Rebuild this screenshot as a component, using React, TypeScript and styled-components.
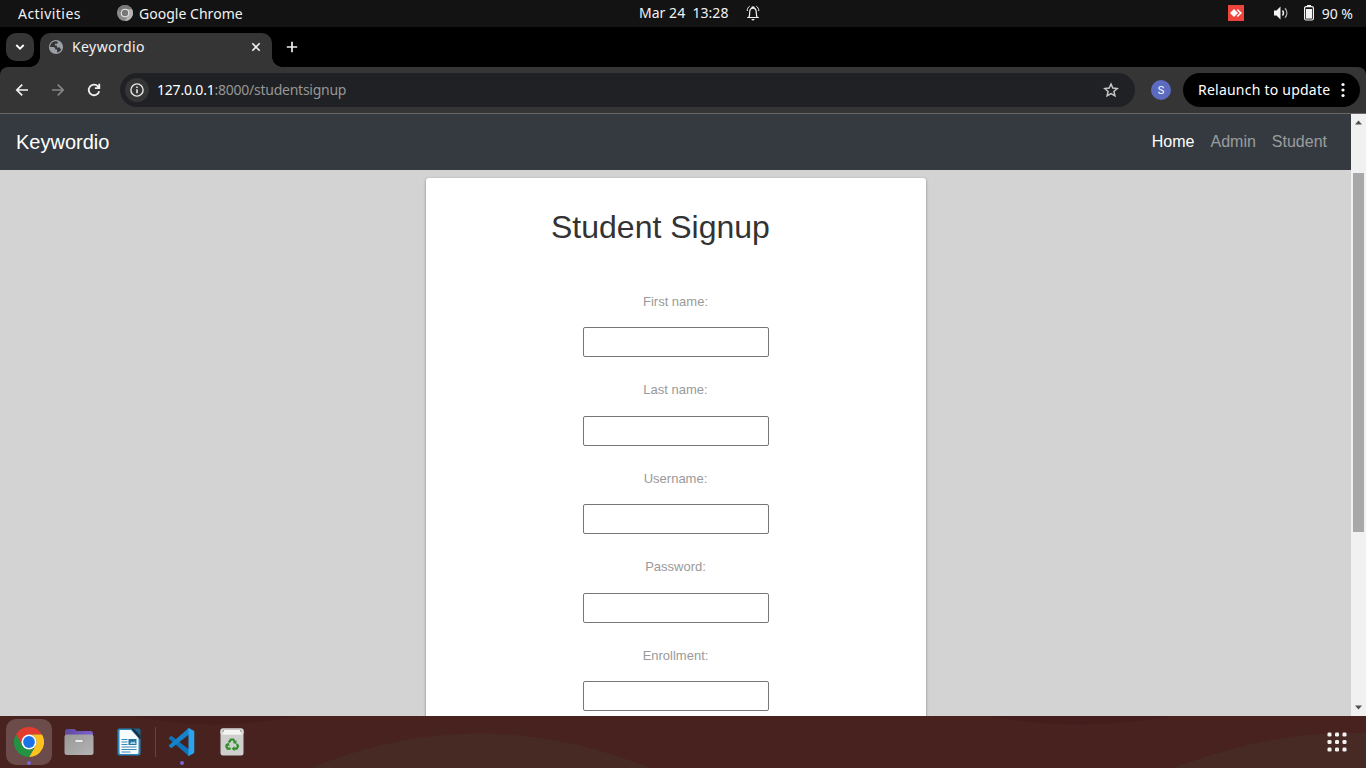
import React from "react";
import styled, { createGlobalStyle } from "styled-components";

const Global = createGlobalStyle`
  * { box-sizing: border-box; }
  body { margin: 0; background: #000; overflow: hidden; }
`;

const ui = `"Noto Sans", "Open Sans", sans-serif`;
const sans = `"Liberation Sans", Arial, sans-serif`;

const Screen = styled.div`
  width: 1366px;
  height: 768px;
  display: flex;
  flex-direction: column;
  overflow: hidden;
  font-family: ${ui};
`;

const Label = styled.span<{ $track?: number; $color?: string; $drop?: number }>`
  font-size: 14px;
  letter-spacing: ${(p) => p.$track ?? 0}px;
  color: ${(p) => p.$color ?? "#f2f2f2"};
  padding-top: ${(p) => p.$drop ?? 0}px;
  white-space: pre;
  line-height: 20px;
`;

const TopBar = styled.header`
  height: 27px;
  flex: none;
  background: #131313;
  display: grid;
  grid-template-columns: 639px 1fr auto;
  align-items: center;
  padding-right: 13px;
`;

const TopGroup = styled.div<{ $left?: number; $gap: number; $lift?: number }>`
  display: flex;
  align-items: center;
  gap: ${(p) => p.$gap}px;
  padding-left: ${(p) => p.$left ?? 0}px;
  padding-bottom: ${(p) => p.$lift ?? 0}px;
`;

const TabStrip = styled.div`
  height: 40px;
  flex: none;
  background: #000;
  display: flex;
  padding-left: 6px;
`;

const TabSearch = styled.button`
  width: 28px;
  height: 28px;
  margin: 6px 6px 0 0;
  padding: 0;
  border: 0;
  border-radius: 10px;
  background: #353535;
  display: grid;
  place-items: center;
`;

const Tab = styled.div`
  position: relative;
  width: 232px;
  height: 34px;
  margin-top: 6px;
  padding: 0 9px 6px 8px;
  border-radius: 10px 10px 0 0;
  background: #353535;
  display: flex;
  align-items: center;
  gap: 8px;
  &::before, &::after {
    content: "";
    position: absolute;
    bottom: 0;
    width: 10px;
    height: 10px;
  }
  &::before { left: -10px; background: radial-gradient(circle at 0 0, transparent 9.5px, #353535 10px); }
  &::after { right: -10px; background: radial-gradient(circle at 100% 0, transparent 9.5px, #353535 10px); }
`;

const TabTitle = styled.div`
  flex: 1;
  display: flex;
`;

const NewTab = styled.div`
  display: flex;
  margin: 13px 0 0 13px;
  height: 14px;
`;

const Toolbar = styled.div`
  height: 47px;
  flex: none;
  background: #353535;
  border-bottom: 1px solid #696866;
  border-radius: 8px 8px 0 0;
  display: flex;
  align-items: center;
  padding: 0 6px 1px 14px;
`;

const NavIcons = styled.div`
  display: flex;
  gap: 20px;
  width: 106px;
`;

const Omnibox = styled.div`
  width: 1015px;
  height: 34px;
  border-radius: 17px;
  background: #202124;
  display: flex;
  align-items: center;
  padding: 0 16px 0 5px;
`;

const InfoChip = styled.div`
  width: 24px;
  height: 24px;
  border-radius: 50%;
  background: #353535;
  display: grid;
  place-items: center;
  margin-right: 8px;
`;

const Url = styled.div`
  flex: 1;
  display: flex;
`;

const Avatar = styled.div`
  width: 20px;
  height: 20px;
  margin: 0 12px 0 16px;
  border-radius: 50%;
  background: #5c6bc0;
  color: #fff;
  font: 11px/21px Roboto, sans-serif;
  text-align: center;
`;

const Relaunch = styled.button`
  width: 177px;
  height: 34px;
  border: 0;
  border-radius: 17px;
  background: #000;
  font-family: inherit;
  display: flex;
  align-items: center;
  justify-content: space-between;
  padding: 0 15px;
`;

const Viewport = styled.div`
  height: 602px;
  flex: none;
  display: flex;
`;

const Page = styled.div`
  flex: 1;
  background: #d3d3d3;
  overflow: hidden;
  font-family: ${sans};
`;

const Navbar = styled.nav`
  height: 56px;
  background: #343a40;
  display: flex;
  align-items: center;
  justify-content: space-between;
  padding: 0 24px 0 16px;
`;

const Brand = styled.div`
  color: #fff;
  font-size: 20px;
  line-height: 30px;
`;

const Links = styled.div`
  display: flex;
  gap: 16px;
`;

const NavLink = styled.a<{ $active?: boolean }>`
  font-size: 16px;
  line-height: 24px;
  color: ${(p) => (p.$active ? "#fff" : "rgba(255, 255, 255, 0.5)")};
`;

const Card = styled.form`
  width: 500px;
  height: 700px;
  margin: 8px auto 0 426px;
  background: #fff;
  border-radius: 3px;
  box-shadow: 0 1px 3px rgba(0, 0, 0, 0.4);
`;

const Title = styled.h2`
  margin: 0;
  padding: 30px 0 0 125px;
  height: 113.6px;
  font-size: 32px;
  line-height: 38px;
  font-weight: 400;
  color: #333;
`;

const Field = styled.label`
  display: flex;
  flex-direction: column;
  align-items: center;
  height: 88.5px;
  font-size: 13px;
  line-height: 20px;
  color: #999;
`;

const FieldName = styled.span`
  padding-right: 1px;
`;

const Input = styled.input`
  width: 186px;
  height: 30px;
  margin: 15.6px 0 0;
  border: 1px solid #767676;
  border-radius: 2px;
  background: #fff;
`;

const Scrollbar = styled.div`
  width: 15px;
  background: #f1f1f1;
  display: flex;
  flex-direction: column;
  align-items: center;
`;

const Arrow = styled.svg`
  margin-top: 6px;
  flex: none;
`;

const Thumb = styled.div`
  width: 11px;
  height: 359px;
  margin: 48px 0 167px;
  background: #a8a8a8;
`;

const Dock = styled.footer`
  position: relative;
  height: 52px;
  flex: none;
  background: #48221f;
  display: flex;
  align-items: center;
  padding: 0 16px 0 6px;
`;

const Backdrop = styled.svg`
  position: absolute;
  inset: 0;
`;

const DockItem = styled.div<{ $active?: boolean; $ml?: number }>`
  position: relative;
  width: 46px;
  height: 46px;
  margin-left: ${(p) => p.$ml ?? 0}px;
  border-radius: 10px;
  background: ${(p) => (p.$active ? "#6b4c4a" : "transparent")};
  display: grid;
  place-items: center;
`;

const RunningDot = styled.i`
  position: absolute;
  bottom: 0;
  left: 21px;
  width: 4px;
  height: 4px;
  border-radius: 50%;
  background: #7d63d8;
`;

const Divider = styled.div`
  position: relative;
  width: 1px;
  height: 30px;
  margin-left: 3px;
  background: #5e4644;
`;

const AppGrid = styled.div`
  position: relative;
  margin-left: auto;
  width: 26px;
  height: 26px;
`;

const FIELDS = ["First name:", "Last name:", "Username:", "Password:", "Enrollment:"];

const GreyChrome = () => (
  <svg width="16" height="16" viewBox="0 0 16 16">
    <circle cx="8" cy="8" r="8" fill="#8b8b8b" />
    <path d="M1.1 4A8 8 0 0 1 14.9 4H8a4 4 0 0 0-3.8 5.2z" fill="#777" />
    <path d="M15 4.2A8 8 0 0 1 8 16l3.4-6A4 4 0 0 0 8 4.2z" fill="#b5b5b5" />
    <circle cx="8" cy="8" r="3.9" fill="#777" stroke="#eee" strokeWidth="1" />
  </svg>
);

const Bell = () => (
  <svg width="14" height="16" viewBox="0 0 14 16" fill="none" stroke="#f2f2f2" strokeWidth="1.2">
    <path d="M1.2 12.5h11.6M2.8 12.3c.8-1 .9-2.2.9-4.8C3.7 4.6 4.8 3.1 7 3.1s3.3 1.5 3.3 4.4c0 2.6.1 3.8.9 4.8M5.7 3.3C5.7 1.5 8.3 1.5 8.3 3.3" />
    <path d="M1.2 6C1.2 3.8 2 2.3 3.7 1.2M12.8 6c0-2.2-.8-3.7-2.5-4.8" strokeWidth="1" />
    <path d="M5 14h4l-2 1.8z" fill="#f2f2f2" stroke="none" />
  </svg>
);

const AnyDesk = () => (
  <svg width="16" height="16" viewBox="0 0 16 16">
    <path fill="#ef443b" d="M0 0h16v16H0z" />
    <path fill="#fff" d="M6 4l4 4-4 4-4-4zM8.7 5l1.1-1.1L14 8l-4.2 4.1L8.7 11l3-3z" />
  </svg>
);

const Speaker = () => (
  <svg width="16" height="16" viewBox="0 0 16 16" fill="none" stroke="#f2f2f2">
    <path d="M1 5.5h2.5L7.5 1.5v13L3.5 10.5H1z" fill="#f2f2f2" stroke="none" />
    <path d="M9.5 5.5c1.2 1.5 1.2 3.5 0 5" strokeWidth="1.4" />
    <path d="M12 3.3c2.5 2.7 2.5 6.7 0 9.4" stroke="#aaa" strokeWidth="1.3" />
  </svg>
);

const Battery = () => (
  <svg width="10" height="16" viewBox="0 0 10 16">
    <path d="M3 0h4v2H3z" fill="#f2f2f2" />
    <rect x=".6" y="1.6" width="8.8" height="13.4" rx="1.5" fill="none" stroke="#f2f2f2" strokeWidth="1.2" />
    <path d="M2 4h6v9.6H2z" fill="#f2f2f2" />
  </svg>
);

const Globe = () => (
  <svg width="16" height="16" viewBox="0 0 16 16">
    <circle cx="8" cy="8" r="7.1" fill="#9aa0a6" />
    <path fill="#353535" d="M8.6 2.3C6.2 2 4.1 3 3 4.9c-.8 1.3-1 2.4-.8 3.1h2.9c1.4 0 2.1.8 2.1 1.8v.8h1.9v2.9c2.2-.5 3.7-1.7 4.3-3.6L12 9.7V8.4H8.9V6.6H7V4.8h1.7c1 0 1-.9 1-1.8z" />
  </svg>
);

const Chrome = () => (
  <svg width="30" height="30" viewBox="0 0 30 30">
    <path d="M2 7.5A15 15 0 0 1 28 7.5H15L8.5 18.7z" fill="#e33b2e" />
    <path d="M28 7.5A15 15 0 0 1 15 30l6.5-11.3A7.5 7.5 0 0 0 15 7.5z" fill="#fcc31e" />
    <path d="M15 30A15 15 0 0 1 2 7.5l6.5 11.2a7.5 7.5 0 0 0 13 0z" fill="#229343" />
    <circle cx="15" cy="15" r="7.5" fill="#fff" />
    <circle cx="15" cy="15" r="5.9" fill="#1b73e8" />
  </svg>
);

const Files = () => (
  <svg width="30" height="28" viewBox="0 0 30 28">
    <defs>
      <linearGradient id="folder" x1="0" y1="0" x2="1" y2="1">
        <stop stopColor="#989898" /><stop offset="1" stopColor="#b4b4b4" />
      </linearGradient>
      <linearGradient id="folderBack"><stop stopColor="#5f4a9e" /><stop offset="1" stopColor="#7a61d0" /></linearGradient>
    </defs>
    <path d="M1 3.500A2.500 2.500 0 0 1 3.500 1h7l2 2h14A2.500 2.500 0 0 1 29 5.500V10H1z" fill="url(#folderBack)" />
    <path d="M.5 8.700A2.200 2.200 0 0 1 2.700 6.500h24.600A2.200 2.200 0 0 1 29.500 8.700v15.800A2.500 2.500 0 0 1 27 27H3a2.500 2.500 0 0 1-2.500-2.500z" fill="url(#folder)" />
    <path d="M11 11.7h8v2.6h-8z" fill="#f8f8f8" stroke="#858585" strokeWidth=".6" />
  </svg>
);

const Writer = () => (
  <svg width="24" height="28" viewBox="0 0 24 28">
    <path d="M2.5.5H16L23.5 8v17a2.5 2.5 0 0 1-2.5 2.5H2.5A2.3 2.3 0 0 1 .5 25V2.5a2 2 0 0 1 2-2z" fill="#2a86bb" />
    <path d="M3 2h11L21.5 10V24.5A1.5 1.5 0 0 1 20 26H4A1.5 1.5 0 0 1 2.5 24.5V3a1 1 0 0 1 .5-1z" fill="#f8fbfc" />
    <path d="M16 .5h5.5a2 2 0 0 1 2 2V8z" fill="#1a648f" />
    <path d="M14 .5h2.5l7 7.5v4z" fill="#17303c" />
    <path d="M4.5 11.5h6M4.5 14h6M4.5 16.5h6M4.5 19h15M4.5 21.5h15M4.5 24h9" stroke="#3789b7" strokeWidth="1.2" />
    <path d="M11.5 11h8v6h-8z" fill="#22729f" />
    <path d="M12.7 16l2-2.5 1.2 1 1.3-1.5 1.7 3z" fill="#9fd3ec" />
  </svg>
);

const Code = () => (
  <svg width="28" height="28" viewBox="0 0 28 28">
    <path d="M1 9.7l1.7-1.5c.4-.3.9-.3 1.3 0L21 21.5V27.3c-.7.1-1.2-.1-1.7-.6L1 10.8c-.4-.4-.4-.8 0-1.1z" fill="#0b74bd" />
    <path d="M1 18.3l1.7 1.5c.4.3.9.3 1.3 0L21 6.500V.7c-.7-.1-1.2.1-1.7.6L1 17.2c-.4.4-.4.8 0 1.1z" fill="#1583cb" />
    <path d="M19.3 27.2c.8.8 1.3.7 1.9.5l4.2-2.3c.6-.3.9-.7.9-1.4V4c0-.7-.3-1.1-.9-1.4L21.2.3c-.6-.2-1.1-.3-1.9.5.7-.5 1.2-.2 1.2.9v24.6c0 1.1-.5 1.4-1.2.9z" fill="#2ba4ee" />
  </svg>
);

const Trash = () => (
  <svg width="24" height="28" viewBox="0 0 24 28">
    <rect x=".5" y=".5" width="23" height="27" rx="2.5" fill="#cfcfcd" />
    <rect x=".5" y=".5" width="23" height="6.5" rx="2" fill="#dededd" />
    <path d="M2.5 1.7h19v2.3h-19z" fill="#9c9c9a" />
    <path d="M4 2h16l1 4.5H3z" fill="#f4f4f4" />
    <g fill="none" stroke="#2f8f2b" strokeWidth="2.2">
      <path d="M8.8 14.5l2.1-3h2.4l1.4 2.3" />
      <path d="M17 16l1 2.2-1.3 2.5h-3" />
      <path d="M10.7 20.7H7.5L6.3 18.3l1.1-2.1" />
    </g>
    <path d="M16.5 12.3v3.7l-3.7-1.1zM14.5 18.2v5l-2.8-2.5zM5.3 16.2l3.4-1.5.9 3.5z" fill="#2f8f2b" />
  </svg>
);

export default function App() {
  return (
    <Screen>
      <Global />
      <TopBar>
        <TopGroup $left={18} $gap={36}>
          <Label $track={0.46}>Activities</Label>
          <TopGroup $gap={6} $lift={1}>
            <GreyChrome />
            <Label $track={0.03} $drop={1}>Google Chrome</Label>
          </TopGroup>
        </TopGroup>
        <TopGroup $gap={18} $lift={1}>
          <Label $track={0.03}>Mar 24  13:28</Label>
          <Bell />
        </TopGroup>
        <TopGroup $gap={0} $lift={1}>
          <AnyDesk />
          <TopGroup $left={29} $gap={15}>
            <Speaker />
            <TopGroup $gap={8}>
              <Battery />
              <Label $drop={2}>90 %</Label>
            </TopGroup>
          </TopGroup>
        </TopGroup>
      </TopBar>

      <TabStrip>
        <TabSearch>
          <svg width="10" height="8" viewBox="0 0 10 8" fill="none" stroke="#fff" strokeWidth="1.8"><path d="M1.3 2L5 5.7 8.7 2" /></svg>
        </TabSearch>
        <Tab>
          <Globe />
          <TabTitle><Label $track={0.42}>Keywordio</Label></TabTitle>
          <svg width="14" height="14" viewBox="0 0 14 14" stroke="#eee" strokeWidth="1.6"><path d="M3.3 3.3l7.4 7.4M10.7 3.3l-7.4 7.4" /></svg>
        </Tab>
        <NewTab>
          <svg width="14" height="14" viewBox="0 0 14 14" stroke="#eee" strokeWidth="1.7"><path d="M7 1.8v10.4M1.8 7h10.4" /></svg>
        </NewTab>
      </TabStrip>

      <Toolbar>
        <NavIcons>
          <svg width="16" height="16" viewBox="0 0 16 16" fill="none" stroke="#f1f1f1" strokeWidth="1.7"><path d="M14 8H3M8.2 2.6L2.8 8l5.4 5.4" /></svg>
          <svg width="16" height="16" viewBox="0 0 16 16" fill="none" stroke="#858585" strokeWidth="1.7"><path d="M2 8h11M7.8 2.6L13.2 8l-5.4 5.4" /></svg>
          <svg width="16" height="16" viewBox="0 0 16 16" fill="none" stroke="#f1f1f1" strokeWidth="1.8"><path d="M13.2 9.2A5.3 5.3 0 1 1 12 4.4l1.2 1.3M13.3 1.8v4.4H8.9" /></svg>
        </NavIcons>
        <Omnibox>
          <InfoChip>
            <svg width="16" height="16" viewBox="0 0 16 16" fill="none" stroke="#e8e8e8" strokeWidth="1.4"><circle cx="8" cy="8" r="6.1" /><path d="M8 7.2v4M8 4.5v1.6" strokeWidth="1.6" /></svg>
          </InfoChip>
          <Url>
            <Label $color="#fff" $track={-0.2}>127.0.0.1</Label>
            <Label $color="#969696" $track={-0.25}>:8000/studentsignup</Label>
          </Url>
          <svg width="16" height="16" viewBox="0 0 16 16" fill="none" stroke="#c7c7c7" strokeWidth="1.5"><path d="M8 2l1.8 4.1 4.4.4-3.3 2.9 1 4.4L8 11.5l-3.9 2.3 1-4.4L1.8 6.5l4.4-.4z" /></svg>
        </Omnibox>
        <Avatar>S</Avatar>
        <Relaunch>
          <Label $color="#fff" $track={0.23}>Relaunch to update</Label>
          <svg width="4" height="16" viewBox="0 0 4 16" fill="#fff"><circle cx="2" cy="2.5" r="1.6" /><circle cx="2" cy="8" r="1.6" /><circle cx="2" cy="13.5" r="1.6" /></svg>
        </Relaunch>
      </Toolbar>

      <Viewport>
        <Page>
          <Navbar>
            <Brand>Keywordio</Brand>
            <Links>
              <NavLink $active>Home</NavLink>
              <NavLink>Admin</NavLink>
              <NavLink>Student</NavLink>
            </Links>
          </Navbar>
          <Card>
            <Title>Student Signup</Title>
            {FIELDS.map((name) => (
              <Field key={name}>
                <FieldName>{name}</FieldName>
                <Input />
              </Field>
            ))}
          </Card>
        </Page>
        <Scrollbar>
          <Arrow width="7" height="5" viewBox="0 0 7 5"><path d="M0 4.5L3.5 .5 7 4.5z" fill="#505050" /></Arrow>
          <Thumb />
          <Arrow width="7" height="5" viewBox="0 0 7 5"><path d="M0 .5L3.5 4.5 7 .5z" fill="#505050" /></Arrow>
        </Scrollbar>
      </Viewport>

      <Dock>
        <Backdrop width="1366" height="52">
          <path d="M135 0Q215 17 295 0zM990 0Q1080 17 1170 0z" fill="#451d1d" />
          <path d="M311 52Q478 -17 650 52zM1174 52Q1270 14 1366 17V52z" fill="#482a25" />
        </Backdrop>
        <DockItem $active><Chrome /><RunningDot /></DockItem>
        <DockItem $ml={4}><Files /></DockItem>
        <DockItem $ml={4}><Writer /></DockItem>
        <Divider />
        <DockItem $ml={3}><Code /><RunningDot /></DockItem>
        <DockItem $ml={4}><Trash /></DockItem>
        <AppGrid>
          <svg width="26" height="26" fill="#f5f2f2">
            {[5.5, 13, 20.5].map((y) => [5.5, 13, 20.5].map((x) => <rect key={`${x}-${y}`} x={x - 2} y={y - 2} width="4" height="4" rx="1.3" />))}
          </svg>
        </AppGrid>
      </Dock>
    </Screen>
  );
}
